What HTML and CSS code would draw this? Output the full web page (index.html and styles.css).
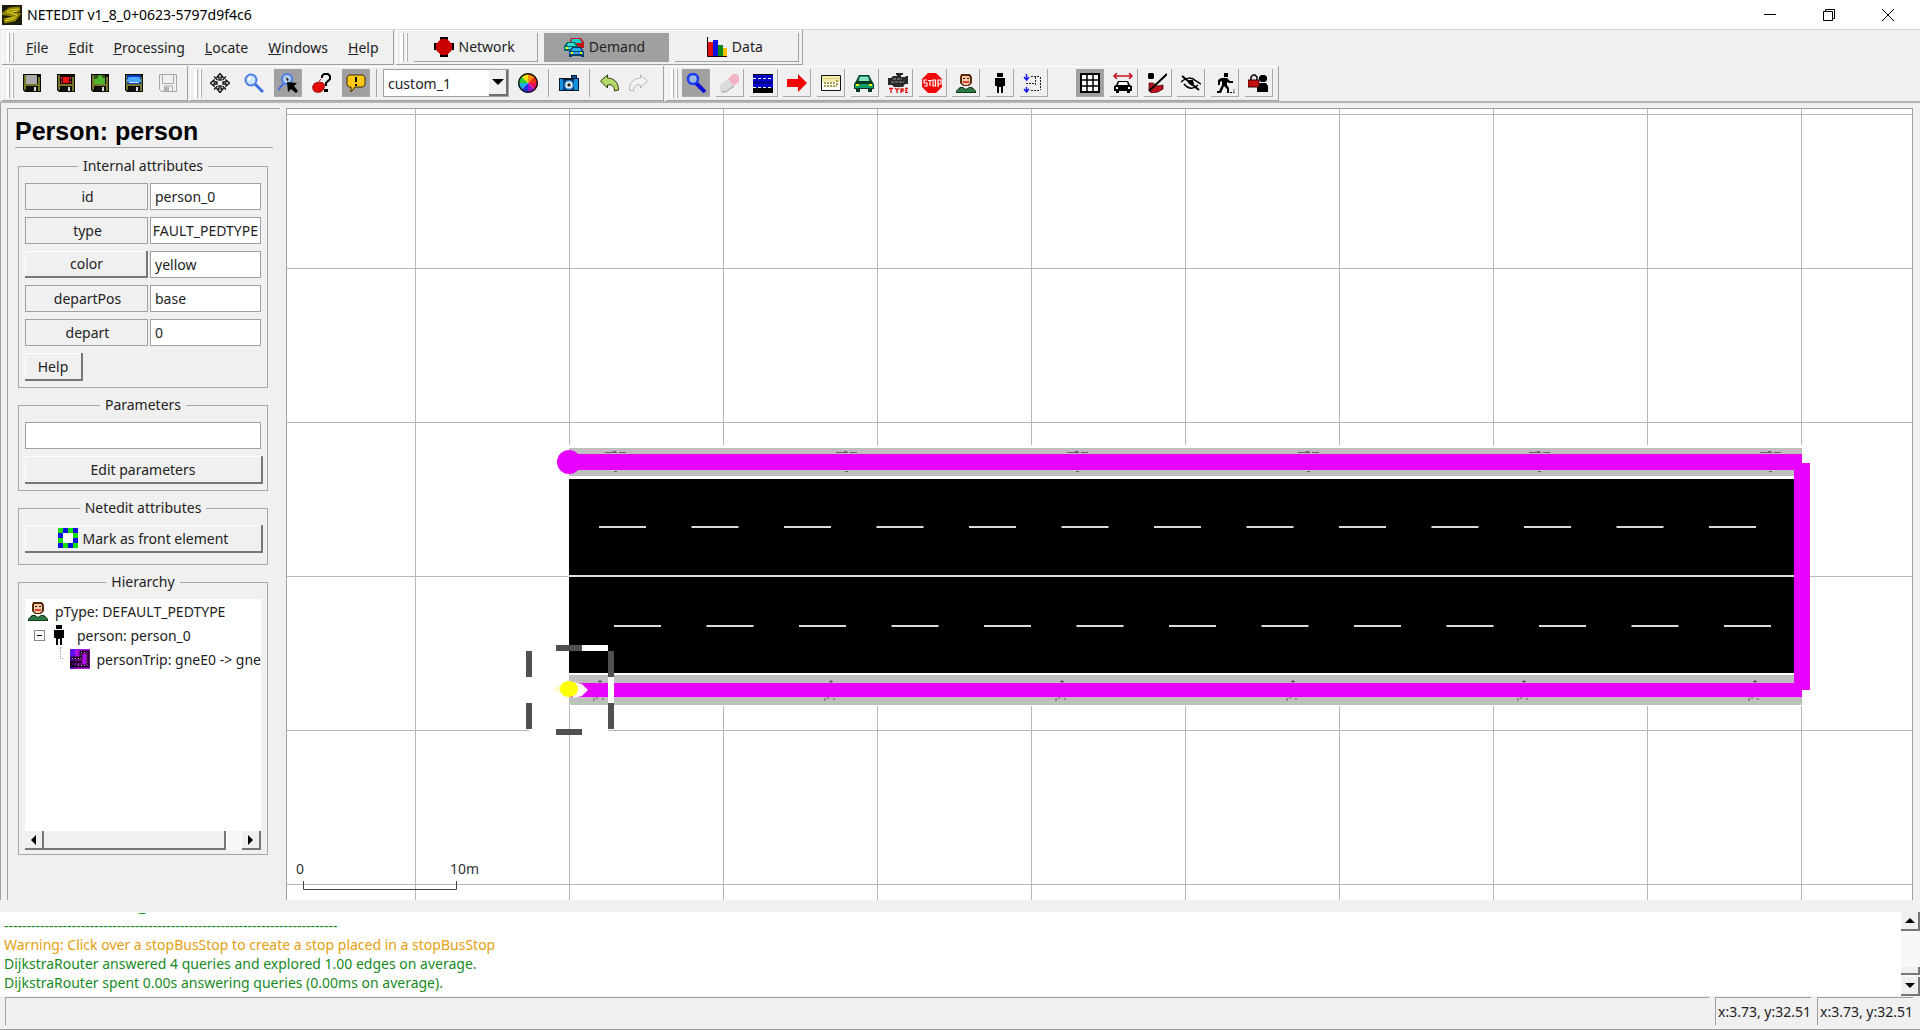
FILE: index.html
```html
<!DOCTYPE html>
<html lang="en">
<head>
    <meta charset="UTF-8">
    <meta name="viewport" content="width=device-width, initial-scale=1.0">
    <title>NETEDIT v1_8_0+0623-5797d9f4c6</title>
    <link rel="stylesheet" href="styles.css">
</head>
<body>
    <!-- shared icons -->
    <svg class="defs" aria-hidden="true">
        <symbol id="floppy" viewBox="0 0 20 20">
            <path d="M1 1h18v18H3l-2-2z" fill="#0a0a00"/>
            <path d="M2 2h2v15H3l-1-1zM16 4h2v14h-2zM4 11h12v2H4z" fill="#77772a"/>
            <path d="M6 14h9v4H6z" fill="#111"/>
            <path d="M12 14h2v4h-2z" fill="#ddd"/>
        </symbol>
        <symbol id="person" viewBox="0 0 20 20">
            <path d="M5 1h9l2 3v6l-3 3H7l-3-3V4z" fill="#5a2a10"/>
            <path d="M6 3h7l1 2v5l-2 2H8l-2-2z" fill="#f7c9a0"/>
            <path d="M7 5h2v1H7zM11 5h2v1h-2z" fill="#222"/>
            <path d="M7 8h6v2H7z" fill="#e04040"/>
            <path d="M0 20v-2l4-4h3l3 2 3-2h3l4 4v2z" fill="#123a18"/>
            <path d="M1 19v-1l4-3h2l3 2 3-2h2l4 3v1z" fill="#2f7a46"/>
        </symbol>
        <symbol id="walker" viewBox="0 0 20 20">
            <path d="M7 0h6v4H7zM5 5h10v8h-2v7h-2v-6H9v6H7v-7H5z" fill="#000"/>
        </symbol>
    </svg>

    <header class="titlebar">
        <svg class="app-icon" viewBox="0 0 20 20">
            <path d="M0 0h20v20H0z" fill="#1d1d08"/>
            <path d="M18 4L8 5 4 8l11 2-3 4-10 2" fill="none" stroke="#8f8200" stroke-width="5"/>
            <path d="M17 4L8 5l-3 2 10 3-3 4-9 2M16 6L9 7M12 12l-8 2" fill="none" stroke="#e6d62a"/>
        </svg>
        <span class="title">NETEDIT v1_8_0+0623-5797d9f4c6</span>
        <div class="window-buttons">
            <button aria-label="Minimize"><svg viewBox="0 0 12 12"><path d="M0 5.500h12" stroke="#000"/></svg></button>
            <button aria-label="Restore"><svg viewBox="0 0 12 12"><path d="M.5 2.500h9v9h-9zM2.500 2.500v-2h9v9h-2" fill="none" stroke="#000"/></svg></button>
            <button aria-label="Close"><svg viewBox="0 0 12 12"><path d="M0 0l12 12M12 0L0 12" stroke="#000"/></svg></button>
        </div>
    </header>

    <div class="dock">
        <nav class="bar menu-bar">
            <span class="grip"></span>
            <button class="menu"><u>F</u>ile</button>
            <button class="menu"><u>E</u>dit</button>
            <button class="menu"><u>P</u>rocessing</button>
            <button class="menu"><u>L</u>ocate</button>
            <button class="menu"><u>W</u>indows</button>
            <button class="menu"><u>H</u>elp</button>
        </nav>
        <div class="bar mode-bar">
            <span class="grip"></span>
            <button class="mode">
                <svg class="icon" viewBox="0 0 20 20"><path d="M6 0h8v20H6zM0 6h20v7H0z" fill="#000"/><path d="M7 2h6l5 5v6l-5 5H7l-5-5V7z" fill="#c80000"/></svg>
                Network
            </button>
            <button class="mode active">
                <svg class="icon" viewBox="0 0 20 20">
                    <path d="M7 1h10l3 4v6H6V4z" fill="#c01818"/><path d="M8 2h8l2 4H7z" fill="#1ccccc"/>
                    <path d="M3 5h8l3 4v5H0V9z" fill="#066"/><path d="M4 6h6l2 3H3zM1 10h12v2H1z" fill="#2fe0d0"/>
                    <path d="M8 10h9l3 5v5h-3v-1H8v1H5v-5z" fill="#023a6a"/><path d="M9 11h7l2 3H7zM6 15h13v2H6z" fill="#20b0f0"/>
                    <path d="M7 15h2v2H7zM16 15h2v2h-2zM2 10h2v2H2z" fill="#ff0"/>
                </svg>
                Demand
            </button>
            <button class="mode">
                <svg class="icon" viewBox="0 0 20 20"><path d="M1 5h5v14H1z" fill="#e01010"/><path d="M6 3h5v16H6z" fill="#1010e0"/><path d="M11 8h5v11h-5z" fill="#0a8a1a"/><path d="M16 11h4v8h-4z" fill="#f0c000"/><path d="M.5 0v19.500H20" fill="none" stroke="#200"/></svg>
                Data
            </button>
        </div>
    </div>

    <div class="dock">
        <div class="bar file-bar">
            <span class="grip"></span>
            <div class="tools">
                <button class="tool flat" aria-label="Save network"><svg class="icon" viewBox="0 0 20 20"><use href="#floppy"/><path d="M4 2h11v9H4z" fill="#aaa"/></svg></button>
                <button class="tool flat" aria-label="Save TLS"><svg class="icon" viewBox="0 0 20 20"><use href="#floppy"/><path d="M4 3h12v8H4z" fill="#200"/><path d="M7 4h6v6H7z" fill="#f01010"/><path d="M5 4h1v2H5zM5 8h1v2H5zM14 4h1v2h-1zM14 8h1v2h-1z" fill="#f33"/></svg></button>
                <button class="tool flat" aria-label="Save additionals"><svg class="icon" viewBox="0 0 20 20"><use href="#floppy"/><path d="M4 2h11v9H4z" fill="#33551a"/><path d="M9 2h2l2 3h2v6H4V6h3z" fill="#4fb52f"/></svg></button>
                <button class="tool flat" aria-label="Save demand"><svg class="icon" viewBox="0 0 20 20"><use href="#floppy"/><path d="M3 2h14v9H3z" fill="#0a3cc0"/><path d="M5 4h10l2 3v2H3V7z" fill="#4aa8ff"/><path d="M5 9h10v1H5z" fill="#cfe8ff"/></svg></button>
                <button class="tool flat" aria-label="Save data" disabled><svg class="icon" viewBox="0 0 20 20"><path d="M1.500 1.500h17v17h-15l-2-2zM4.500 2v8.500h11V2M6.500 18v-5h8v5M8.500 15v3" fill="none" stroke="#a8a8a8"/><path d="M7 14h4v4H7z" fill="#b0b0b0"/></svg></button>
            </div>
        </div>
        <div class="bar view-bar">
            <span class="grip"></span>
            <div class="tools view-tools">
                <button class="tool flat" aria-label="Recenter"><svg class="icon" viewBox="0 0 20 20"><path d="M10 .5l3 3.500h-2v3H9V4H7zM10 19.500l3-3.500h-2v-3H9v3H7zM.5 10L4 7v2h3v2H4v2zM19.500 10L16 7v2h-3v2h3v2zM4 3.500l3.500 3.500M16 3.500L12.500 7M4 16.500L7.500 13M16 16.500L12.500 13" fill="#fff" stroke="#111" stroke-width="1.300"/></svg></button>
                <button class="tool flat" aria-label="Edit viewport"><svg class="icon" viewBox="0 0 20 20"><path d="M11 11l8 8" stroke="#3f6fe0" stroke-width="3"/><circle cx="7" cy="7" r="5.500" fill="#cfe6ff" stroke="#4a7de8" stroke-width="2"/><path d="M4 7l3-3" stroke="#fff" stroke-width="2"/></svg></button>
                <button class="tool pressed" aria-label="Zoom style"><svg class="icon" viewBox="0 0 20 20"><path d="M6 10l-6 7" stroke="#3f6fe0" stroke-width="2"/><circle cx="9" cy="6" r="5" fill="#b8cfee" stroke="#4a7de8" stroke-width="2"/><path d="M8 4l3 3-2 1z" fill="#000"/><path d="M9 9l10 1-3 3 4 5-2 2-5-4-3 3z" fill="#000"/></svg></button>
                <button class="tool flat" aria-label="Show tooltips"><svg class="icon" viewBox="0 0 20 20"><path d="M6 10l3-4M7 10c5-2 6 2 5 5s-4 5-6 4c-4 1-6-3-5-6s3-4 6-3z" fill="#e80808" stroke="#900"/><path d="M10 5V3l2-2h4l2 2v3l-4 4v3" fill="none" stroke="#000" stroke-width="2"/><path d="M12 16h4v3h-4z" fill="#000"/></svg></button>
                <button class="tool pressed" aria-label="Show messages"><svg class="icon" viewBox="0 0 20 20"><path d="M3 2h14l2 2v8l-2 2H9l-4 5v-5H3l-2-2V4z" fill="#ffc818" stroke="#3a2a00"/><path d="M9 4h2v5H9zM9 11h2v2H9z" fill="#000"/></svg></button>
            </div>
            <span class="separator"></span>
            <div class="combo">
                <select aria-label="Coloring scheme"><option>custom_1</option></select>
                <span class="combo-arrow"></span>
            </div>
            <button class="tool flat" aria-label="Coloring options"><svg class="icon" viewBox="0 0 20 20"><path d="M10 10L3 3a10 10 0 0 1 7-3z" fill="#ffe000"/><path d="M10 10V0a10 10 0 0 1 7 3z" fill="#ff8a00"/><path d="M10 10l7-7a10 10 0 0 1 3 7z" fill="#f03010"/><path d="M10 10h10a10 10 0 0 1-3 7z" fill="#f01060"/><path d="M10 10l7 7a10 10 0 0 1-7 3z" fill="#9010d0"/><path d="M10 10v10a10 10 0 0 1-7-3z" fill="#2030e0"/><path d="M10 10l-7 7a10 10 0 0 1-3-7z" fill="#20b0e0"/><path d="M10 10H0a10 10 0 0 1 3-7z" fill="#30d030"/><circle cx="10" cy="10" r="9.300" fill="none" stroke="#111" stroke-width="1.400"/></svg></button>
            <span class="separator"></span>
            <button class="tool flat" aria-label="Make snapshot"><svg class="icon" viewBox="0 0 20 20"><path d="M0 5h12V2h6v3h2v13H0z" fill="#001830"/><path d="M1 6h3v11H1zM15 6h4v11h-4z" fill="#1490e0"/><path d="M13 3h4v2h-4z" fill="#0a58a0"/><path d="M4 7h11v10H4z" fill="#0a3c70"/><circle cx="10" cy="12" r="4" fill="#fff" stroke="#49a8f0" stroke-width="1.500"/><circle cx="10" cy="12" r="1.800" fill="#222"/></svg></button>
            <span class="separator"></span>
            <button class="tool flat" aria-label="Undo"><svg class="icon" viewBox="0 0 20 20"><path d="M.5 8l7-6v3c6 0 11 4 11 12l-4 1c0-5-3-7-7-6v3z" fill="#b5d86a" stroke="#2a3a10"/></svg></button>
            <button class="tool flat" aria-label="Redo" disabled><svg class="icon" viewBox="0 0 20 20"><path d="M19.500 8l-7-6v3c-6 0-11 4-11 12l4 1c0-5 3-7 7-6v3z" fill="#f4f4f4" stroke="#b4b4b4"/></svg></button>
        </div>
        <div class="bar edit-bar">
            <span class="grip"></span>
            <div class="tools edit-tools">
                <button class="tool pressed" aria-label="Inspect"><svg class="icon" viewBox="0 0 20 20"><path d="M10 10l9 9" stroke="#1010d8" stroke-width="4"/><circle cx="7" cy="6" r="5" fill="#9cb8e0" stroke="#1a3cf0" stroke-width="2.500"/></svg></button>
                <button class="tool" aria-label="Delete"><svg class="icon" viewBox="0 0 20 20"><path d="M9 6l5-5h4l2 3v5l-6 4z" fill="#f2b4c2"/><path d="M9 6l-8 6-1 4 3 3h4l8-6z" fill="#dcdcdc"/><path d="M2 19h5l8-6" fill="none" stroke="#999"/></svg></button>
                <button class="tool" aria-label="Select"><svg class="icon" viewBox="0 0 20 20"><path d="M0 1h20v19H0z" fill="#000"/><path d="M0 2h20v13H0z" fill="#0000c8"/><path d="M0 5.500h20M0 14.500h20" stroke="#fff" stroke-dasharray="3 2"/><path d="M0 9.500h20" stroke="#000080" stroke-width="2"/></svg></button>
                <button class="tool" aria-label="Route"><svg class="icon" viewBox="0 0 20 20"><path d="M0 6h11V1l9 9-9 9v-5H0z" fill="#f40000"/></svg></button>
                <button class="tool" aria-label="Vehicle type"><svg class="icon" viewBox="0 0 20 20"><path d="M.5 2.500h19v15H.5z" fill="#fff" stroke="#111"/><path d="M1 3h18v6H1z" fill="#f0ecb0"/><path d="M2 5.500h16" stroke="#d8d070"/><path d="M3 10h11M3 13h13M16 7v5" fill="none" stroke="#8a8620" stroke-width="1.500" stroke-dasharray="2 1"/></svg></button>
                <button class="tool" aria-label="Vehicle"><svg class="icon" viewBox="0 0 20 20"><path d="M5 2h10l3 6 2 3v5h-2v3h-4v-3H6v3H2v-3H0v-5l2-3z" fill="#053c22"/><path d="M6 3h8l2 5H4zM1 11h18v4H1z" fill="#12a06a"/><path d="M6 4h8l1 4H5z" fill="#8ee0c0"/><path d="M2 11h3v2H2zM15 11h3v2h-3z" fill="#ff0"/></svg></button>
                <button class="tool" aria-label="Type"><svg class="icon" viewBox="0 0 20 20"><path d="M8 0h7v2h-2v2h4l1-1h2v8h-3l-2 3H6l-2-2H0V5h3l2-2h4V2H8z" fill="#2a2a2a"/><path d="M5 6h9M3 9h13" stroke="#999" stroke-dasharray="3 1"/><path d="M1 15.500h4M3 16v4M7 15l2 2 2-2M9 17v3M13 20v-4h2v2h-2M17 15.500h3M17 17.500h2M17 19.500h3" fill="none" stroke="#e01010" stroke-width="1.300"/></svg></button>
                <button class="tool" aria-label="Stop"><svg class="icon" viewBox="0 0 20 20"><path d="M6 0h8l6 6v8l-6 6H6l-6-6V6z" fill="#f00808"/><path d="M5 7H2v3h3v3H2M6 7.500h4M8 7v6M11 7h2.500v6H11zM16 14V7h3v4h-3" fill="none" stroke="#fff" stroke-width="1.200"/></svg></button>
                <button class="tool" aria-label="Person type"><svg class="icon"><use href="#person"/></svg></button>
                <button class="tool" aria-label="Person"><svg class="icon"><use href="#walker"/></svg></button>
                <button class="tool" aria-label="Person plan"><svg class="icon" viewBox="0 0 20 20"><path d="M3.500 1v5M1 4l2.500 3L6 4M3.500 14v5M1 16l2.500 3L6 16" fill="none" stroke="#1a1af0" stroke-width="1.500"/><path d="M8 3.500h9M17.500 4v13M8 17.500h9M3 10.500h9M12.500 4v8" fill="none" stroke="#222" stroke-dasharray="2 1"/></svg></button>
            </div>
            <div class="tools option-tools">
                <button class="tool pressed" aria-label="Show grid"><svg class="icon" viewBox="0 0 20 20"><path d="M1 1h18v18H1z" fill="#fff" stroke="#000" stroke-width="2"/><path d="M7 1v18M13 1v18M1 7h18M1 13h18" stroke="#000" stroke-width="1.500"/></svg></button>
                <button class="tool" aria-label="Spread vehicles"><svg class="icon" viewBox="0 0 20 20"><path d="M1 3h18M4 0L1 3l3 3M16 0l3 3-3 3" fill="none" stroke="#c81020" stroke-width="1.500"/><path d="M5 8h10l2 4 2 1v5h-2v2h-3v-2H6v2H3v-2H1v-5l2-1z" fill="#000"/><path d="M6 9h8l1 3H5zM3 14h2v2H3zM15 14h2v2h-2z" fill="#fff"/></svg></button>
                <button class="tool" aria-label="Show demand"><svg class="icon" viewBox="0 0 20 20"><path d="M2 0h4l1 1v4L6 6H2L1 5V1z" fill="#000"/><path d="M2 10h4l4 3 6-1v4l-5 3-7 1-2-3z" fill="#c01020" stroke="#300" stroke-width=".7"/><path d="M2 18L20 1" stroke="#000" stroke-width="2"/></svg></button>
                <button class="tool" aria-label="Hide shapes"><svg class="icon" viewBox="0 0 20 20"><path d="M0 9c5-5 11-5 15-1l5 3M3 11c4 5 9 6 14 1" fill="none" stroke="#000" stroke-width="1.500"/><path d="M7 7h5l1 4-2 2-4-3z" fill="#000"/><path d="M1 3l17 14" stroke="#000" stroke-width="2"/></svg></button>
                <button class="tool" aria-label="Show trips"><svg class="icon" viewBox="0 0 20 20"><path d="M9 0h4v4H9zM6 5h6l3 3h3v2h-4l-2-1v3l2 3v5h-2v-4l-3-3-3 7H2v-2h2l3-6V8L5 9v3H3V7z" fill="#000"/><path d="M12 19.500h7v-3" fill="none" stroke="#000" stroke-dasharray="2 1"/></svg></button>
                <button class="tool" aria-label="Lock person"><svg class="icon" viewBox="0 0 20 20"><path d="M13 2h4l2 2v3l-2 2h-4l-2-2V4zM9 19v-5l3-4h6l2 3v6z" fill="#000"/><path d="M3 8V4l2-2h2l2 2v4" fill="none" stroke="#000" stroke-width="1.500"/><path d="M0 7h11v7H0z" fill="#c01010" stroke="#300"/></svg></button>
            </div>
        </div>
    </div>

    <main class="workspace">
        <aside class="inspector">
            <h1>Person: person</h1>

            <fieldset>
                <legend>Internal attributes</legend>
                <div class="attribute"><label for="id">id</label><input id="id" value="person_0"></div>
                <div class="attribute"><label for="type">type</label><input id="type" class="clipped" value="DEFAULT_PEDTYPE"></div>
                <div class="attribute"><button class="push">color</button><input aria-label="color" value="yellow"></div>
                <div class="attribute"><label for="departPos">departPos</label><input id="departPos" value="base"></div>
                <div class="attribute"><label for="depart">depart</label><input id="depart" value="0"></div>
                <button class="push help">Help</button>
            </fieldset>

            <fieldset>
                <legend>Parameters</legend>
                <input class="parameters" aria-label="Parameters">
                <button class="push wide">Edit parameters</button>
            </fieldset>

            <fieldset class="netedit">
                <legend>Netedit attributes</legend>
                <button class="push wide">
                    <svg class="icon" viewBox="0 0 20 20"><path d="M2.500 2.500h15v15h-15z" fill="#fff" stroke="#10e010" stroke-width="5"/><path d="M5 0h5v5H5zM15 0h5v5h-5zM0 5h5v5H0zM15 10h5v5h-5zM0 15h5v5H0zM10 15h5v5h-5z" fill="#1010e0"/></svg>
                    Mark as front element
                </button>
            </fieldset>

            <fieldset class="hierarchy">
                <legend>Hierarchy</legend>
                <ul class="tree">
                    <li><svg class="icon"><use href="#person"/></svg>pType: DEFAULT_PEDTYPE</li>
                    <li class="level-1"><span class="expander"></span><svg class="icon"><use href="#walker"/></svg>person: person_0</li>
                    <li class="level-2"><span class="branch"></span><svg class="icon" viewBox="0 0 20 20"><path d="M0 0h20v20H0z" fill="#b010e8"/><path d="M0 0h5v20H0z" fill="#6010f0"/><path d="M1 9h10V3h7v14H1v-4h11" fill="none" stroke="#200020" stroke-width="3"/><path d="M2 9.500h9v-6h6v13H6" fill="none" stroke="#d8a0e8" stroke-dasharray="1 2"/></svg>personTrip: gneE0 -&gt; gne</li>
                </ul>
                <div class="scroll-x">
                    <button class="arrow-left" aria-label="Scroll left"></button>
                    <span class="thumb-x"></span>
                    <button class="arrow-right" aria-label="Scroll right"></button>
                </div>
            </fieldset>
        </aside>

        <svg class="canvas">
            <defs>
                <pattern id="grid" x="128" y="5" width="154" height="154" patternUnits="userSpaceOnUse">
                    <path d="M0 .5h154M.5 0v154" stroke="#b8b8b8"/>
                </pattern>
                <g id="mark-top" fill="none" stroke="#6a636a"><path d="M-10 .5h12M4 .5h7M-2 -.5h3"/><path d="M-1 19.500h3" /></g>
                <g id="mark-bottom" fill="none" stroke="#5f585f"><path d="M-2 .5h4M0 -1v3M-6 17v3M3 17v2M-4 17h2"/></g>
            </defs>
            <rect width="100%" height="100%" fill="url(#grid)"/>

            <!-- edges with sidewalks -->
            <rect class="clear" x="281" y="336" width="1236" height="261"/>
            <rect class="sidewalk" x="282" y="339" width="1233" height="28"/>
            <rect class="sidewalk" x="282" y="566" width="1233" height="30"/>
            <rect class="verge" x="282" y="593" width="1233" height="3"/>
            <rect x="282" y="370" width="1225" height="194"/>
            <path class="divider" d="M282 467h1225"/>
            <path class="lane" d="M312 418h1158"/>
            <path class="lane" d="M327 517h1158"/>

            <!-- person trip -->
            <path class="trip" d="M282 353h1233"/>
            <path class="trip thin" d="M282 581h1233"/>
            <path class="trip" d="M1515 354v227"/>
            <circle class="trip-start" cx="282" cy="353" r="12"/>
            <use href="#mark-top" x="328" y="343"/>
            <use href="#mark-top" x="559" y="343"/>
            <use href="#mark-top" x="790" y="343"/>
            <use href="#mark-top" x="1021" y="343"/>
            <use href="#mark-top" x="1252" y="343"/>
            <use href="#mark-top" x="1483" y="343"/>
            <use href="#mark-bottom" x="313" y="572"/>
            <use href="#mark-bottom" x="544" y="572"/>
            <use href="#mark-bottom" x="775" y="572"/>
            <use href="#mark-bottom" x="1006" y="572"/>
            <use href="#mark-bottom" x="1237" y="572"/>
            <use href="#mark-bottom" x="1468" y="572"/>

            <!-- selected person -->
            <path d="M286 573l9 2 6 6-6 6-9 2z" fill="#fff4f8"/>
            <path d="M266 580l8-4v9z" fill="#fffbc0"/>
            <ellipse cx="282" cy="580" rx="9" ry="8" fill="#ff0"/>
            <path class="frame light" d="M242 539h79M242 623h79M242 542v78M324 542v78"/>
            <path class="frame" d="M269 539h26M269 623h26M242 542v26M242 594v26M324 542v26M324 594v26"/>

            <!-- scale -->
            <path class="scale" d="M16.500 772v8.500h153v-8.500"/>
            <text class="scale-text" x="9" y="765">0</text>
            <text class="scale-text" x="163" y="765">10m</text>
        </svg>
    </main>

    <section class="messages">
        <div class="log">
            <p class="info rest">_</p>
            <p class="info">--------------------------------------------------------------------------</p>
            <p class="warning">Warning: Click over a stopBusStop to create a stop placed in a stopBusStop</p>
            <p class="info">DijkstraRouter answered 4 queries and explored 1.00 edges on average.</p>
            <p class="info">DijkstraRouter spent 0.00s answering queries (0.00ms on average).</p>
        </div>
        <div class="scroll-y">
            <button class="arrow-up" aria-label="Scroll up"></button>
            <span class="thumb-y"></span>
            <button class="arrow-down" aria-label="Scroll down"></button>
        </div>
    </section>

    <footer class="statusbar">
        <span class="cell grow"></span>
        <span class="cell">x:3.73, y:32.51</span>
        <span class="cell">x:3.73, y:32.51</span>
    </footer>
</body>
</html>
```

FILE: styles.css
```css
* {
    box-sizing: border-box;
}

body {
    margin: 0;
    height: 100vh;
    display: flex;
    flex-direction: column;
    overflow: hidden;
    background-color: #f0f0f0;
    color: #222;
    font-family: "Noto Sans", "Open Sans", sans-serif;
    font-size: 14px;
}

button, input, select {
    font: inherit;
    color: inherit;
    border: none;
    border-radius: 0;
    margin: 0;
    padding: 0;
    background: none;
}

.defs {
    position: absolute;
    width: 0;
    height: 0;
}

.icon {
    width: 20px;
    height: 20px;
    flex: none;
}

/* Title bar */
.titlebar {
    height: 30px;
    flex: none;
    display: flex;
    align-items: center;
    gap: 5px;
    padding: 0 3px 0 2px;
    background-color: #fff;
    border-bottom: 1px solid #d8d8d8;
    color: #000;
}

.app-icon {
    width: 20px;
    height: 20px;
}

.window-buttons {
    margin-left: auto;
    display: flex;
}

.window-buttons button {
    width: 59px;
    height: 28px;
    display: flex;
    align-items: center;
    justify-content: center;
}

.window-buttons svg {
    width: 12px;
    height: 12px;
}

/* Docked bars */
.dock {
    display: flex;
    gap: 2px;
    flex: none;
    height: 36px;
    padding-left: 2px;
}

.dock + .dock {
    border-bottom: 2px solid #b4b4b4;
    height: 37px;
}

.bar {
    display: flex;
    align-items: center;
    height: 35px;
    padding-left: 4px;
    border-right: 1px solid #a0a0a0;
    border-bottom: 1px solid #a0a0a0;
    box-shadow: inset 1px 1px 0 #fff;
}

.grip {
    width: 8px;
    height: 29px;
    flex: none;
    border: solid #b0b0b0;
    border-width: 0 1px;
    background: linear-gradient(to right, #fff 2px, #b0b0b0 2px, #b0b0b0 3px, #f0f0f0 3px, #f0f0f0 5px, #fff 5px);
    border-left-color: #fff;
}

.menu-bar {
    width: 392px;
}

.menu {
    height: 28px;
    padding: 0 10px;
}

.menu-bar .grip {
    margin-right: 2px;
}

.mode-bar {
    width: 407px;
    gap: 6px;
}

.mode {
    flex: 1;
    height: 29px;
    display: flex;
    align-items: center;
    justify-content: center;
    gap: 5px;
    padding-right: 3px;
    border: solid #a0a0a0;
    border-width: 0 1px 1px 0;
}

.mode.active {
    background-color: #a0a0a0;
}

.mode:last-child {
    margin-right: 3px;
}

.file-bar {
    width: 186px;
}

.view-bar {
    width: 474px;
}

.edit-bar {
    width: 613px;
}

.tools {
    display: flex;
    justify-content: space-between;
    margin-left: 4px;
    width: 164px;
}

.edit-tools {
    width: 366px;
}

.option-tools {
    width: 197px;
    margin-left: 28px;
}

.tool {
    width: 28px;
    height: 28px;
    flex: none;
    display: flex;
    align-items: center;
    justify-content: center;
    border: solid #a8a8a8;
    border-width: 0 1px 1px 0;
}

.tool.flat {
    border-color: transparent;
}

.tool.pressed {
    background-color: #a0a0a0;
}

.separator {
    width: 1px;
    height: 28px;
    margin: 0 6px;
    background-color: #a8a8a8;
}

.combo {
    width: 126px;
    height: 28px;
    display: flex;
    margin-right: 5px;
    background-color: #fff;
    border: 1px solid #a0a0a0;
}

.combo select {
    flex: 1;
    min-width: 0;
    appearance: none;
    padding-left: 4px;
}

.combo-arrow {
    width: 19px;
    display: flex;
    align-items: center;
    justify-content: center;
    background-color: #f0f0f0;
    border: solid #707070;
    border-width: 0 2px 2px 0;
}

.combo-arrow::before {
    content: "";
    border: 6px solid transparent;
    border-top-color: #000;
    border-bottom: none;
}

/* Workspace */
.workspace {
    flex: 1;
    min-height: 0;
    display: flex;
    gap: 6px;
    padding: 5px 7px 0 6px;
    border-left: 1px solid #a0a0a0;
}

.inspector {
    width: 273px;
    flex: none;
    padding: 8px 7px 0 10px;
    border: solid #a0a0a0;
    border-width: 1px 0 0 1px;
}

h1 {
    margin: 0 0 8px -3px;
    height: 31px;
    border-bottom: 1px solid #a0a0a0;
    color: #000;
    font: bold 25px/28px "Liberation Sans", sans-serif;
}

fieldset {
    min-width: 0;
    margin: 0 5px 7px 0;
    padding: 7px 6px 6px;
    border: 1px solid #a8a8a8;
}

legend {
    margin: 0 auto;
    padding: 0 5px;
    height: 20px;
    line-height: 20px;
}

.attribute {
    display: flex;
    gap: 2px;
    margin-bottom: 7px;
}

.attribute label, .attribute button {
    width: 124px;
    height: 27px;
    line-height: 25px;
    padding-left: 2px;
    text-align: center;
}

.attribute label {
    border: 1px solid #a0a0a0;
}

input {
    width: 111px;
    height: 27px;
    padding: 0 4px;
    background-color: #fff;
    border: 1px solid #a0a0a0;
}

.clipped {
    direction: rtl;
    padding: 0 2px 0 1px;
}

.push {
    height: 28px;
    border: solid #777;
    border-width: 0 2px 2px 0;
    box-shadow: inset 1px 1px 0 #fff;
}

.help {
    width: 58px;
    display: block;
}

.parameters {
    display: block;
    width: 236px;
    margin-bottom: 7px;
}

.wide {
    width: 238px;
    display: flex;
    align-items: center;
    justify-content: center;
    gap: 5px;
}

.hierarchy {
    margin-bottom: 0;
    padding-bottom: 4px;
}

.netedit {
    padding-bottom: 11px;
}

/* Hierarchy tree */
.tree {
    height: 232px;
    margin: 0;
    padding: 0;
    list-style: none;
    overflow: hidden;
    background-color: #fff;
}

.tree li {
    display: flex;
    align-items: center;
    height: 24px;
    padding-left: 3px;
    gap: 7px;
    white-space: nowrap;
}

.tree .level-1 {
    padding-left: 9px;
}

.tree .level-1 .icon {
    margin-right: 1px;
}

.tree .level-2 {
    padding-left: 35px;
}

.expander {
    width: 11px;
    height: 11px;
    margin-right: -3px;
    border: 1px solid #888;
    background: linear-gradient(#000, #000) center / 5px 1px no-repeat;
}

.branch {
    width: 8px;
    height: 12px;
    margin-top: -12px;
    border: dotted #999;
    border-width: 0 0 1px 1px;
}

/* Scrollbars */
.scroll-x {
    display: flex;
    height: 19px;
    background-color: #f8f8f8;
}

.scroll-x button, .scroll-y button {
    width: 19px;
    height: 19px;
    flex: none;
    display: flex;
    align-items: center;
    justify-content: center;
}

.scroll-x button, .scroll-y button, .thumb-x, .thumb-y {
    background-color: #f0f0f0;
    border: solid #777;
    border-width: 0 2px 2px 0;
}

.thumb-x {
    width: 182px;
    margin-right: auto;
}

.scroll-x button::before, .scroll-y button::before {
    content: "";
    border: 5px solid transparent;
}

.scroll-x .arrow-left::before {
    border-right-color: #000;
    border-left: none;
}

.scroll-x .arrow-right::before {
    border-left-color: #000;
    border-right: none;
}

.scroll-y .arrow-up::before {
    border-bottom-color: #000;
    border-top: none;
}

.scroll-y .arrow-down::before {
    border-top-color: #000;
    border-bottom: none;
}

.scroll-y {
    width: 19px;
    display: flex;
    flex-direction: column;
    background-color: #f8f8f8;
}

.thumb-y {
    height: 8px;
    margin: auto 0 2px;
}

/* Network view */
.canvas {
    flex: 1;
    min-width: 0;
    height: 100%;
    background-color: #fff;
    border: solid #a0a0a0;
    border-width: 1px 1px 0 1px;
}

.clear {
    fill: #fff;
}

.sidewalk {
    fill: #c0bdc0;
}

.verge {
    fill: #b4c8b4;
}

.divider, .lane {
    stroke: #d8dcd8;
    stroke-width: 2;
}

.lane {
    stroke-dasharray: 47 45.5;
}

.trip {
    fill: none;
    stroke: #e800ff;
    stroke-width: 16;
}

.trip.thin {
    stroke-width: 14;
}

.trip-start {
    fill: #e800ff;
}

.frame {
    fill: none;
    stroke: #505050;
    stroke-width: 6;
}

.frame.light {
    stroke: #fff;
}

.scale {
    fill: none;
    stroke: #444;
}

.scale-text {
    fill: #333;
    font-size: 14px;
}

/* Message window */
.messages {
    flex: none;
    height: 84px;
    margin-top: 12px;
    display: flex;
    background-color: #fff;
}

.log {
    flex: 1;
    display: flex;
    flex-direction: column;
    justify-content: flex-end;
    padding: 0 0 4px 4px;
    overflow: hidden;
}

.log p {
    margin: 0;
    flex: none;
    line-height: 19px;
}

.info {
    color: #178a1e;
}

.warning {
    color: #e5a00d;
}

.log .rest {
    padding-left: 135px;
}

/* Status bar */
.statusbar {
    flex: none;
    height: 34px;
    display: flex;
    gap: 6px;
    padding: 1px 7px 4px 5px;
    border-bottom: 1px solid #a0a0a0;
}

.cell {
    width: 96px;
    padding-left: 2px;
    line-height: 28px;
    white-space: nowrap;
    border: solid #a0a0a0;
    border-width: 1px 0 0 1px;
}

.cell.grow {
    flex: 1;
}
```
